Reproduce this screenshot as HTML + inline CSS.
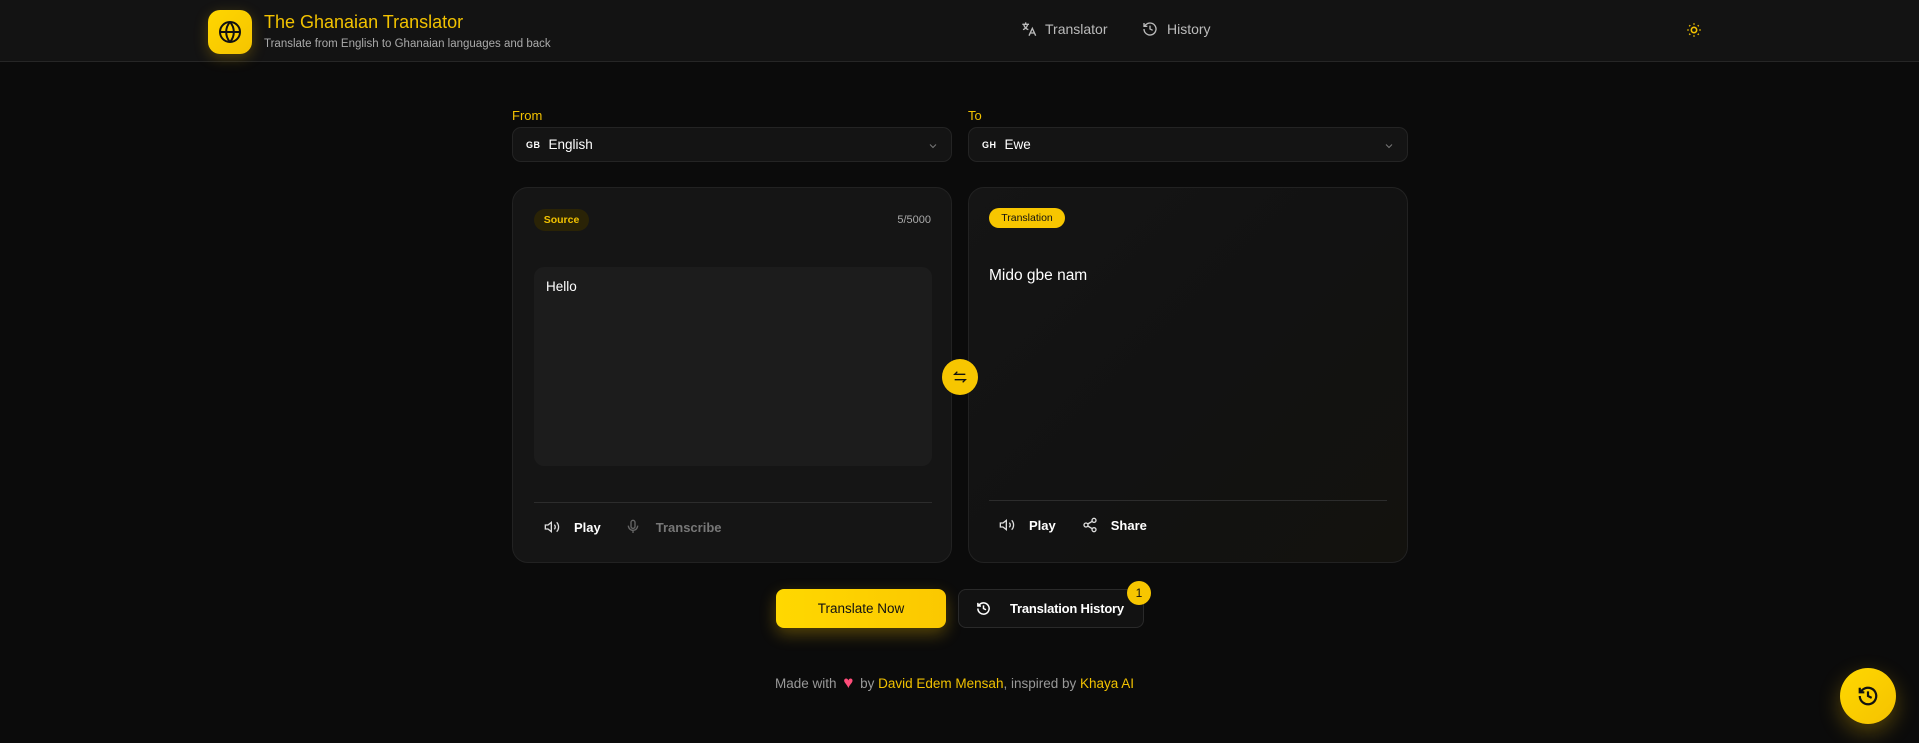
<!DOCTYPE html>
<html><head><meta charset="utf-8"><style>
*{box-sizing:border-box;margin:0;padding:0}
body{width:1919px;height:743px;background:#0b0b0b;font-family:"Liberation Sans",sans-serif;position:relative;overflow:hidden;color:#eee}
.a{position:absolute}
header{position:absolute;left:0;top:0;width:1919px;height:62px;background:#131313;border-bottom:1px solid #262626}
.logo{left:208px;top:10px;width:44px;height:44px;border-radius:12px;background:linear-gradient(135deg,#ffd600,#f5c400);box-shadow:0 4px 14px rgba(255,200,0,.25);display:flex;align-items:center;justify-content:center}
.sel{height:35px;border:1px solid #242424;background:#141414;border-radius:9px;display:flex;align-items:center;padding-left:13px;font-size:13.5px;color:#fff}
.sel b{font-size:9px;margin-right:8px;letter-spacing:.5px}
.card{top:187px;height:376px;width:440px;border:1px solid #222;border-radius:16px;background:#151515}
.lbl{font-size:13px;color:#f2c200}
.row{display:flex;align-items:center;font-size:13px;font-weight:bold}
svg{display:block}
</style></head><body>
<header>
<div class="a logo"><svg width="24" height="24" viewBox="0 0 24 24" fill="none" stroke="#111" stroke-width="2"><circle cx="12" cy="12" r="10"/><path d="M2 12h20M12 2a15 15 0 0 1 0 20M12 2a15 15 0 0 0 0 20"/></svg></div>
<div class="a" style="left:264px;top:12px;font-size:18px;color:#f2c200">The Ghanaian Translator</div>
<div class="a" style="left:264px;top:38px;font-size:11.5px;color:#aaa">Translate from English to Ghanaian languages and back</div>
<div class="a row" style="left:1021px;top:21px;font-weight:normal;color:#bbb;font-size:14px"><svg width="16" height="16" viewBox="0 0 24 24" fill="none" stroke="#bbb" stroke-width="2"><path d="M2 5h10M7 2v3M4 5c1 4 4 7 7 8M10 5c-1 4-4 7-7 8M12 22l5-11 5 11M14 18h6"/></svg><span style="margin-left:8px">Translator</span></div>
<div class="a row" style="left:1142px;top:21px;font-weight:normal;color:#bbb;font-size:14px"><svg width="16" height="16" viewBox="0 0 24 24" fill="none" stroke="#bbb" stroke-width="2"><path d="M3 12a9 9 0 1 0 3-6.7L3 8M3 3v5h5M12 7v5l4 2"/></svg><span style="margin-left:9px">History</span></div>
<div class="a" style="left:1686px;top:22px"><svg width="16" height="16" viewBox="0 0 24 24" fill="none" stroke="#f2c200" stroke-width="2.4"><circle cx="12" cy="12" r="4"/><path d="M12 2v2M12 20v2M4.9 4.9l1.4 1.4M17.7 17.7l1.4 1.4M2 12h2M20 12h2M4.9 19.1l1.4-1.4M17.7 6.3l1.4-1.4"/></svg></div>
</header>

<div class="a lbl" style="left:512px;top:108px">From</div>
<div class="a lbl" style="left:968px;top:108px">To</div>
<div class="a sel" style="left:512px;top:127px;width:440px"><b>GB</b>English<svg class="a" style="right:12px;top:12px" width="12" height="12" viewBox="0 0 24 24" fill="none" stroke="#777" stroke-width="2"><path d="M6 9l6 6 6-6"/></svg></div>
<div class="a sel" style="left:968px;top:127px;width:440px"><b>GH</b>Ewe<svg class="a" style="right:12px;top:12px" width="12" height="12" viewBox="0 0 24 24" fill="none" stroke="#777" stroke-width="2"><path d="M6 9l6 6 6-6"/></svg></div>

<div class="a card" style="left:512px">
<div class="a" style="left:21px;top:21px;width:55px;height:22px;border-radius:11px;background:#2a2306;color:#f2c200;font-size:10.5px;font-weight:bold;text-align:center;line-height:22px">Source</div>
<div class="a" style="right:20px;top:26px;font-size:11px;color:#aaa">5/5000</div>
<div class="a" style="left:21px;top:79px;width:398px;height:199px;background:#1c1c1c;border-radius:10px"><div style="padding:12px 0 0 12px;font-size:13.5px;color:#fff">Hello</div></div>
<div class="a" style="left:21px;top:314px;width:398px;height:1px;background:#2c2c2c"></div>
<div class="a row" style="left:31px;top:331px"><svg width="16" height="16" viewBox="0 0 24 24" fill="none" stroke="#ddd" stroke-width="2"><path d="M11 5L6 9H2v6h4l5 4zM15.5 8.5a5 5 0 0 1 0 7M19 5a10 10 0 0 1 0 14"/></svg><span style="margin-left:14px;color:#fff">Play</span><svg style="margin-left:24px" width="16" height="16" viewBox="0 0 24 24" fill="none" stroke="#666" stroke-width="2"><rect x="9" y="2" width="6" height="12" rx="3"/><path d="M5 10a7 7 0 0 0 14 0M12 17v4"/></svg><span style="margin-left:15px;color:#777">Transcribe</span></div>
</div>

<div class="a card" style="left:968px;background:linear-gradient(135deg,#151515,#121212 50%,#13120e)">
<div class="a" style="left:20px;top:20px;width:76px;height:20px;border-radius:10px;background:#f7c600;color:#111;font-size:10.5px;text-align:center;line-height:20px">Translation</div>
<div class="a" style="left:20px;top:79px;font-size:15.5px;color:#fff">Mido gbe nam</div>
<div class="a" style="left:20px;top:312px;width:398px;height:1px;background:#2c2c2c"></div>
<div class="a row" style="left:30px;top:329px"><svg width="16" height="16" viewBox="0 0 24 24" fill="none" stroke="#ddd" stroke-width="2"><path d="M11 5L6 9H2v6h4l5 4zM15.5 8.5a5 5 0 0 1 0 7M19 5a10 10 0 0 1 0 14"/></svg><span style="margin-left:14px;color:#fff">Play</span><svg style="margin-left:26px" width="16" height="16" viewBox="0 0 24 24" fill="none" stroke="#ddd" stroke-width="2"><circle cx="18" cy="5" r="3"/><circle cx="6" cy="12" r="3"/><circle cx="18" cy="19" r="3"/><path d="M8.6 13.5l6.8 4M15.4 6.5l-6.8 4"/></svg><span style="margin-left:13px;color:#fff">Share</span></div>
</div>

<div class="a" style="left:942px;top:359px;width:36px;height:36px;border-radius:50%;background:#f7c600;display:flex;align-items:center;justify-content:center"><svg width="16" height="16" viewBox="0 0 24 24" fill="none" stroke="#111" stroke-width="2"><path d="M20 8H4l4-4M4 16h16l-4 4"/></svg></div>

<div class="a" style="left:776px;top:589px;width:170px;height:39px;border-radius:8px;background:linear-gradient(90deg,#ffd800,#fbc800);box-shadow:0 6px 16px rgba(255,200,0,.3);color:#111;font-size:13.5px;text-align:center;line-height:39px">Translate Now</div>
<div class="a row" style="left:958px;top:589px;width:186px;height:39px;border-radius:8px;border:1px solid #2a2a2a;background:#121212;padding-left:17px"><svg width="15" height="15" viewBox="0 0 24 24" fill="none" stroke="#fff" stroke-width="2.4"><path d="M3 12a9 9 0 1 0 3-6.7L3 8M3 3v5h5M12 7v5l4 2"/></svg><span style="margin-left:19px;color:#fff;font-size:13px;letter-spacing:-.2px">Translation History</span></div>
<div class="a" style="left:1127px;top:581px;width:24px;height:24px;border-radius:50%;background:#f7c600;color:#111;font-size:12px;text-align:center;line-height:24px">1</div>

<div class="a" style="left:775px;top:673px;font-size:13.5px;color:#999;white-space:nowrap">Made with <span style="color:#ff4d7a;font-size:17px;margin:0 3px">♥</span> by <span style="color:#f2c200">David Edem Mensah</span>, inspired by <span style="color:#f2c200">Khaya AI</span></div>

<div class="a" style="left:1840px;top:668px;width:56px;height:56px;border-radius:50%;background:linear-gradient(135deg,#ffd800,#f5c200);box-shadow:0 8px 22px rgba(255,200,0,.3);display:flex;align-items:center;justify-content:center"><svg width="22" height="22" viewBox="0 0 24 24" fill="none" stroke="#111" stroke-width="2.4"><path d="M3 12a9 9 0 1 0 3-6.7L3 8M3 3v5h5M12 7v5l4 2"/></svg></div>
</body></html>
